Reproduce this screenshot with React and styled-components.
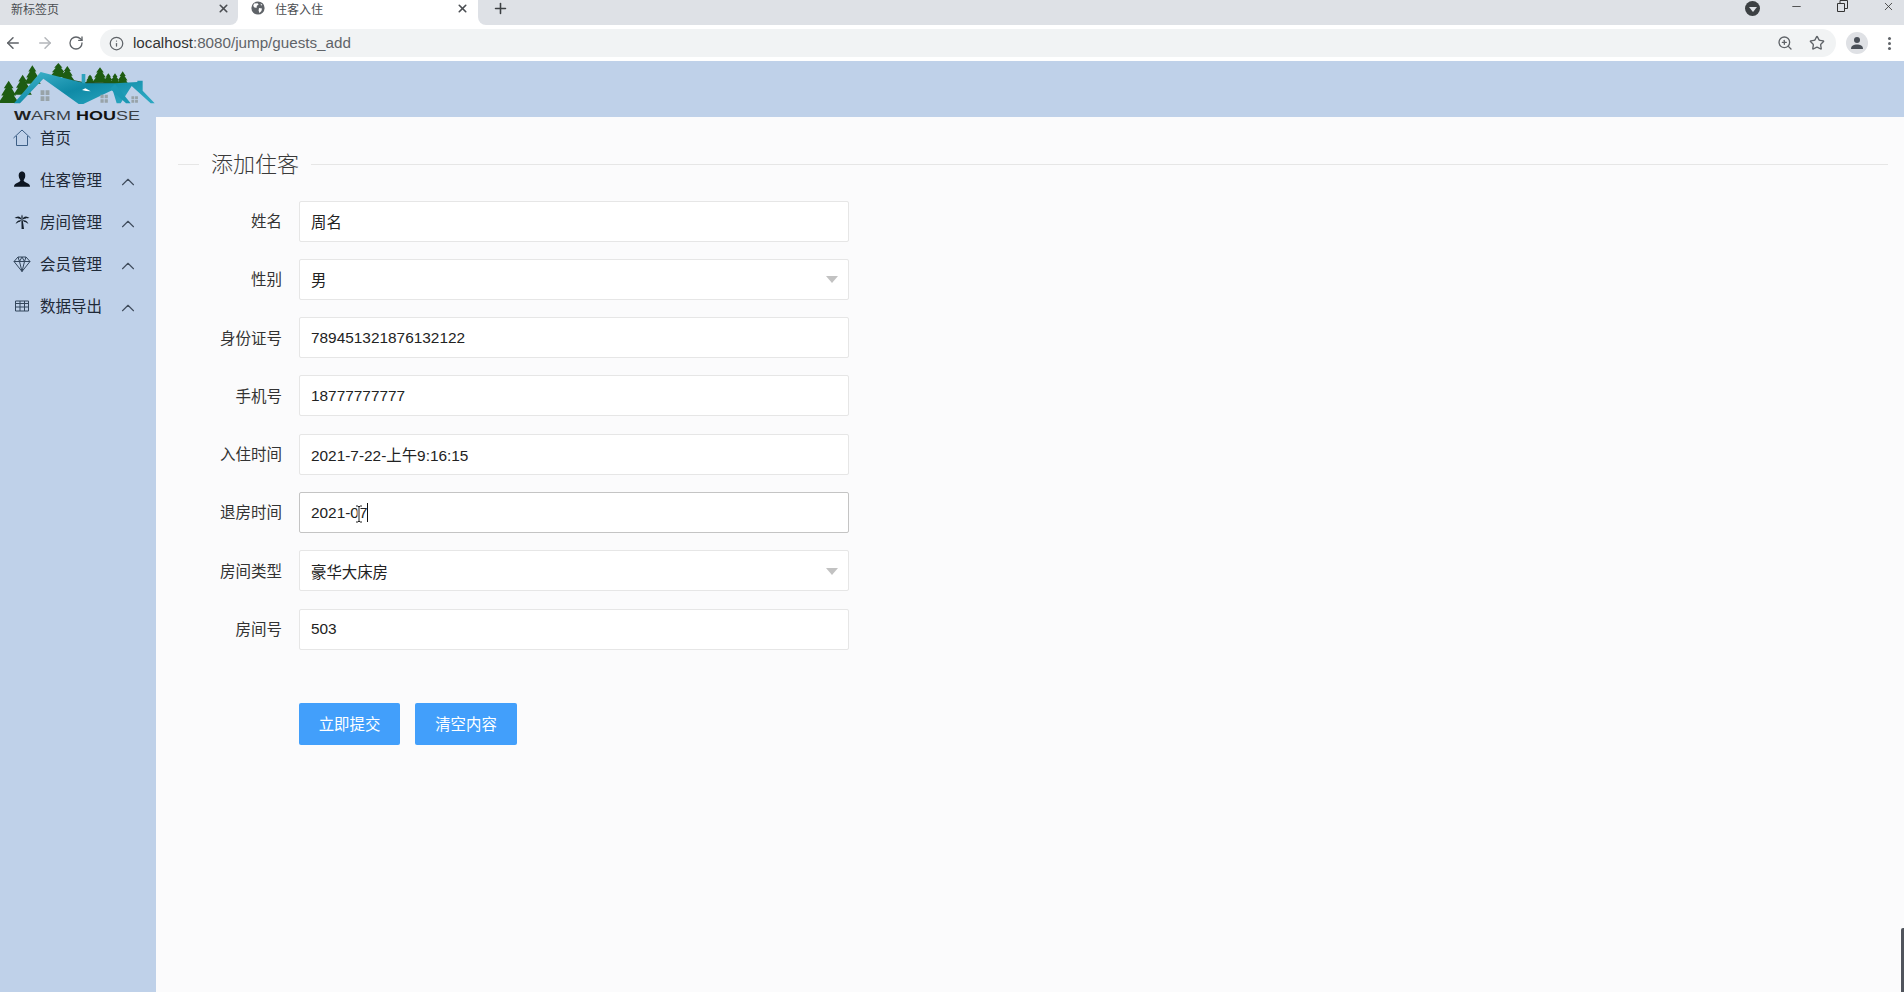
import React from "react";
import styled, { createGlobalStyle } from "styled-components";
import { ArrowLeft, ArrowRight, RotateCw, Info, ZoomIn, Star, X, Plus, Minus, ChevronUp } from "lucide-react";

const GlobalStyle = createGlobalStyle`
  html, body {
    margin: 0;
    height: 100%;
    overflow: hidden;
    background: #fbfbfc;
    font-family: "Liberation Sans", "Noto Sans CJK SC", sans-serif;
  }
  #root {
    height: 100%;
  }
`;

const Screen = styled.div`
  height: 992px;
  display: flex;
  flex-direction: column;
`;

const TabStrip = styled.div`
  height: 25px;
  background: #ffffff;
  display: flex;
  align-items: stretch;
  color: #4a4d51;
  font-size: 12px;
`;

const Tab = styled.div`
  width: ${(p) => (p.$active ? 240 : 238)}px;
  display: flex;
  align-items: center;
  box-sizing: border-box;
  padding: ${(p) => (p.$active ? "0 9px 9px 13px" : "0 8px 9px 11px")};
  gap: 10px;
  background: ${(p) => (p.$active ? "#ffffff" : "#dee1e6")};
  border-bottom-right-radius: ${(p) => (p.$active ? 0 : 8)}px;
  span {
    flex: 1;
  }
`;

const StripRest = styled.div`
  flex: 1;
  display: flex;
  background: #dee1e6;
  border-bottom-left-radius: 8px;
`;

const NewTab = styled.div`
  width: 44px;
  display: flex;
  align-items: center;
  justify-content: center;
  padding-bottom: 9px;
  color: #3c4043;
`;

const WindowControls = styled.div`
  margin-left: auto;
  display: flex;
  align-items: flex-start;
  color: #333;
  gap: 34px;
  padding: 0 9px 0 0;
`;

const ProfileDrop = styled.div`
  width: 15px;
  height: 15px;
  border-radius: 50%;
  background: #3c4043;
  display: flex;
  align-items: center;
  justify-content: center;
  margin: 1px -4px 0 0;
  &::after {
    content: "";
    border-left: 4px solid transparent;
    border-right: 4px solid transparent;
    border-top: 5px solid #dee1e6;
    margin-top: 2px;
  }
`;

const Toolbar = styled.div`
  height: 36px;
  background: #ffffff;
  display: flex;
  align-items: center;
  padding: 0 4px;
  color: #5f6368;
  gap: 14px;
`;

const AddressBar = styled.div`
  flex: 1;
  height: 28px;
  margin-left: 2px;
  background: #f1f3f4;
  border-radius: 14px;
  display: flex;
  align-items: center;
  padding: 0 11px 0 9px;
  font-size: 15.2px;
  color: #5f6368;
  gap: 9px;
  b {
    font-weight: 400;
    color: #333;
  }
`;

const AddressText = styled.div`
  flex: 1;
  padding-bottom: 2px;
`;

const AddressIcons = styled.div`
  display: flex;
  align-items: center;
  gap: 16px;
`;

const Avatar = styled.div`
  width: 22px;
  height: 22px;
  border-radius: 50%;
  background: #dfe1e5;
  margin: 0 6px 0 -4px;
  display: flex;
  align-items: center;
  justify-content: center;
`;

const MenuDots = styled.div`
  width: 3px;
  height: 3px;
  border-radius: 50%;
  background: #5f6368;
  box-shadow: 0 -5px 0 #5f6368, 0 5px 0 #5f6368;
  margin-right: 9px;
`;

const Page = styled.div`
  flex: 1;
  display: grid;
  grid-template-columns: 156px 1fr;
  grid-template-rows: 56px 1fr;
  min-height: 0;
`;

const Sidebar = styled.aside`
  grid-row: 1 / 3;
  background: #bfd1e9;
  display: flex;
  flex-direction: column;
`;

const LogoBox = styled.div`
  height: 54.5px;
  svg {
    display: block;
    overflow: visible;
  }
`;

const NavItem = styled.div`
  height: 42px;
  display: flex;
  align-items: center;
  padding-left: 13px;
  font-size: 15.5px;
  color: #1f2a38;
`;

const NavIcon = styled.div`
  width: 18px;
  height: 18px;
  margin-right: 9px;
  display: flex;
  align-items: center;
  justify-content: center;
  position: relative;
  top: 1px;
`;

const NavLabel = styled.span`
  width: 77px;
  white-space: nowrap;
`;

const Caret = styled(ChevronUp)`
  color: #3f4c5c;
  position: relative;
  top: 3px;
`;

const TopBand = styled.div`
  background: #bfd1e9;
`;

const Main = styled.main`
  padding: 30px 16px 0 22px;
  position: relative;
`;

const Legend = styled.div`
  display: flex;
  align-items: center;
  height: 30px;
  margin-bottom: 23.5px;
  color: #3a3a3a;
  font-size: 22px;
  font-weight: 300;
  &::before {
    content: "";
    width: 21px;
    height: 1px;
    background: #e6e6e6;
    margin: 4px 12px 0 0;
  }
  &::after {
    content: "";
    flex: 1;
    height: 1px;
    background: #e6e6e6;
    margin: 4px 0 0 12px;
  }
`;

const Form = styled.form`
  display: flex;
  flex-direction: column;
  gap: 17.3px;
`;

const Row = styled.div`
  display: flex;
  align-items: center;
`;

const Label = styled.label`
  width: 104px;
  margin: 0 17px 2px 0;
  text-align: right;
  font-size: 15.5px;
  color: #333;
  white-space: nowrap;
`;

const Field = styled.div`
  width: 550px;
  height: 41px;
  box-sizing: border-box;
  background: #fff;
  border: 1px solid ${(p) => (p.$focused ? "#c4c4c4" : "#e6e6e6")};
  border-radius: 2px;
  display: flex;
  align-items: center;
  padding: 0 10px 0 11px;
  font-size: 15.4px;
  color: #222;
  position: relative;
`;

const FieldText = styled.span`
  flex: 1;
  white-space: pre;
`;

const SelectArrow = styled.i`
  width: 0;
  height: 0;
  border-left: 6.5px solid transparent;
  border-right: 6.5px solid transparent;
  border-top: 7px solid #c2c2c2;
  margin-top: 1px;
`;

const TextCaret = styled.i`
  display: inline-block;
  width: 1px;
  height: 19px;
  background: #111;
  vertical-align: -4px;
`;

const MouseCursor = styled.svg`
  position: absolute;
  left: 55px;
  top: 12px;
`;

const Buttons = styled.div`
  display: flex;
  gap: 15px;
  margin: 53px 0 0 121px;
`;

const Button = styled.button`
  height: 42px;
  width: ${(p) => p.$w}px;
  border: 0;
  border-radius: 2px;
  background: #429ffb;
  color: #fff;
  font: inherit;
  font-size: 15.4px;
  padding: 0 0 2px;
`;

const ScrollStub = styled.div`
  position: absolute;
  right: 0;
  bottom: 0;
  width: 3px;
  height: 64px;
  border-radius: 2px 0 0 0;
  background: #50545c;
`;

// a pine drawn from its tip downwards in three tiers
const Tree = ({ x, top, h, w }) => {
  const t = (f) => top + h * f;
  return (
    <path
      fill="#1e5c12"
      d={`M${x} ${top} L${x + w * 0.26} ${t(0.34)} L${x + w * 0.16} ${t(0.34)} L${x + w * 0.4} ${t(0.66)} L${x + w * 0.28} ${t(0.66)} L${x + w * 0.55} ${t(1)} L${x - w * 0.55} ${t(1)} L${x - w * 0.28} ${t(0.66)} L${x - w * 0.4} ${t(0.66)} L${x - w * 0.16} ${t(0.34)} L${x - w * 0.26} ${t(0.34)} Z`}
    />
  );
};

const trees = [
  { x: 26, top: 68, h: 67, w: 56 },
  { x: 68, top: 50, h: 60, w: 50 },
  { x: 97, top: 22, h: 55, w: 46 },
  { x: 175, top: 15, h: 42, w: 48 },
  { x: 202, top: 24, h: 44, w: 40 },
  { x: 270, top: 50, h: 26, w: 28 },
  { x: 300, top: 28, h: 46, w: 44 },
  { x: 325, top: 46, h: 30, w: 30 },
  { x: 345, top: 46, h: 32, w: 30 },
  { x: 368, top: 40, h: 42, w: 36 },
];

const LogoWindow = ({ x, y, w, h }) => (
  <path
    fill="none"
    stroke="#98a3a8"
    strokeWidth={w / 2.6}
    strokeDasharray={`${h * 0.42} ${h * 0.12}`}
    d={`M${x + w * 0.25} ${y} V${y + h} M${x + w * 0.75} ${y} V${y + h}`}
  />
);

// drawn in 3x units of the 156 wide logo
const Logo = () => (
  <svg width="156" height="64" viewBox="0 9 468 192">
    <defs>
      <linearGradient id="roof" x1="0" y1="0" x2="1" y2="0.7">
        <stop offset="0" stopColor="#45b7cf" />
        <stop offset="0.55" stopColor="#0f8aa6" />
        <stop offset="1" stopColor="#2aa6c0" />
      </linearGradient>
    </defs>
    {trees.map((t) => (
      <Tree key={t.x} {...t} />
    ))}
    <path fill="#244f22" d="M200 62 L250 72 L345 74 L300 92 L256 112 Z" />
    <path fill="#2ea3bd" d="M245 48 H256 V78 H245 Z" />
    <path
      fill="url(#roof)"
      d="M42 136 L122 42 L215 66 L240 72 L252 76 L345 76 L412 72 V68 H428 V98 L464 136 H452 L395 84 L362 136 H350 L338 96 L250 138 H236 L130 62 L60 136 Z"
    />
    <path fill="#1b98b3" d="M330 92 L345 78 L392 136 H378 Z" />
    <path fill="#ffffff" d="M246 96 L256 91 L272 100 L258 99 Z" />
    <LogoWindow x={120} y={97} w={30} h={33} />
    <LogoWindow x={300} y={110} w={25} h={25} />
    <LogoWindow x={393} y={115} w={22} h={20} />
    <text
      x="42"
      y="185"
      fontFamily="Liberation Sans, sans-serif"
      fontSize="41"
      fill="#3a3f45"
      textLength="378"
      lengthAdjust="spacingAndGlyphs"
    >
      <tspan fontWeight="700" fill="#222">W</tspan>ARM <tspan fontWeight="700" fill="#111">HOU</tspan>SE
    </text>
  </svg>
);

const HomeIcon = () => (
  <svg width="18" height="18" viewBox="0 0 18 18" fill="none" stroke="#3d5f86" strokeWidth="1">
    <path d="M0.5 9 L9 1 L17.5 9" />
    <path d="M3.5 7 V16.5 H14.5 V7" />
  </svg>
);

const PersonIcon = () => (
  <svg width="18" height="18" viewBox="0 0 18 18" fill="#0d1622">
    <path d="M9 0.5 C11.6 0.5 12.6 3 12.2 5.6 C12 7.2 11.2 8.4 10.6 9.2 C10.6 10.6 13 11.4 15 12.4 C16.6 13.2 17 14.4 17 15.8 H1 C1 14.4 1.4 13.2 3 12.4 C5 11.4 7.4 10.6 7.4 9.2 C6.8 8.4 6 7.2 5.8 5.6 C5.4 3 6.4 0.5 9 0.5 Z" />
  </svg>
);

const PalmIcon = () => (
  <svg width="18" height="18" viewBox="0 0 18 18" fill="#16202c">
    <path d="M8.4 7.5 L9.8 7.5 L11 16 L8.6 16 Z" />
    <path d="M9 7 C7.5 3 4.5 2.6 1.5 5 C3 4.6 3.6 6 4.6 5 C5 6 6 5.2 9 7 Z" />
    <path d="M9 7 C10.5 3 13.5 2.6 16.5 5 C15 4.6 14.4 6 13.4 5 C13 6 12 5.2 9 7 Z" />
    <path d="M9 7.5 C6.5 6.5 3.5 7.5 2.6 11 C4 9.6 5 10 5.6 9 C6.4 9.4 7 8.4 9 7.5 Z" />
    <path d="M9 7.5 C11.5 6.5 14.5 7.5 15.4 11 C14 9.6 13 10 12.4 9 C11.6 9.4 11 8.4 9 7.5 Z" />
    <path d="M9 7 C8 5 8.2 3.2 9 1.6 C9.8 3.2 10 5 9 7 Z" />
  </svg>
);

const DiamondIcon = () => (
  <svg width="18" height="18" viewBox="0 0 18 18" fill="none" stroke="#33465c" strokeWidth="1">
    <path d="M5 2 H13 L17 6.5 L9 16.5 L1 6.5 Z" />
    <path d="M1 6.5 H17 M5 2 L6.5 6.5 L9 16.5 L11.5 6.5 L13 2 M6.5 6.5 L9 2 L11.5 6.5" />
  </svg>
);

const GridIcon = () => (
  <svg width="16" height="14" viewBox="0 0 16 14" fill="none" stroke="#33465c" strokeWidth="1">
    <path d="M1.5 2 H14.5 V12 H1.5 Z" />
    <path d="M1.5 4.5 H14.5 M1.5 8 H14.5 M6 2 V12 M10.5 2 V12" />
  </svg>
);

const GlobeIcon = () => (
  <svg width="14" height="14" viewBox="0 0 14 14">
    <circle cx="7" cy="7" r="6.6" fill="#5f6368" />
    <path
      fill="#fff"
      d="M3 2.6 L6.6 2.2 L7.6 3.6 L5.6 5 L6 6.4 L3.8 6.8 L2.2 5 Z M8 7 L11 7.6 L10.4 10 L8.4 12 L7.6 9.6 Z M9.6 2.6 L11.4 4 L10 4.6 Z"
    />
  </svg>
);

const AvatarIcon = () => (
  <svg width="14" height="14" viewBox="0 0 14 14" fill="#4a5058">
    <circle cx="7" cy="4" r="3" />
    <path d="M1 13 C1 9.6 4 8.6 7 8.6 C10 8.6 13 9.6 13 13 Z" />
  </svg>
);

const RestoreIcon = () => (
  <svg width="11" height="12" viewBox="0 0 11 12" fill="none" stroke="#333" strokeWidth="1">
    <path d="M0.5 3.5 H7.5 V11.5 H0.5 Z" />
    <path d="M3 3.5 V0.5 H10.5 V8.5 H7.5" />
  </svg>
);

const navItems = [
  { label: "住客管理", icon: <PersonIcon /> },
  { label: "房间管理", icon: <PalmIcon /> },
  { label: "会员管理", icon: <DiamondIcon /> },
  { label: "数据导出", icon: <GridIcon /> },
];

const fields = [
  { label: "姓名", value: "周名" },
  { label: "性别", value: "男", select: true },
  { label: "身份证号", value: "789451321876132122" },
  { label: "手机号", value: "18777777777" },
  { label: "入住时间", value: "2021-7-22-上午9:16:15" },
  { label: "退房时间", value: "2021-07", focused: true },
  { label: "房间类型", value: "豪华大床房", select: true },
  { label: "房间号", value: "503" },
];

const App = () => {
  return (
    <Screen>
      <GlobalStyle />
      <TabStrip>
        <Tab>
          <span>新标签页</span>
          <X size={13} strokeWidth={3} />
        </Tab>
        <Tab $active>
          <GlobeIcon />
          <span>住客入住</span>
          <X size={13} strokeWidth={3} />
        </Tab>
        <StripRest>
          <NewTab>
            <Plus size={17} strokeWidth={2.2} />
          </NewTab>
          <WindowControls>
            <ProfileDrop />
            <Minus size={13} strokeWidth={1.5} />
            <RestoreIcon />
            <X size={13} strokeWidth={1.5} />
          </WindowControls>
        </StripRest>
      </TabStrip>
      <Toolbar>
        <ArrowLeft size={18} />
        <ArrowRight size={18} color="#b4b7bb" />
        <RotateCw size={16} />
        <AddressBar>
          <Info size={15} />
          <AddressText>
            <b>localhost</b>:8080/jump/guests_add
          </AddressText>
          <AddressIcons>
            <ZoomIn size={16} />
            <Star size={16} />
          </AddressIcons>
        </AddressBar>
        <Avatar>
          <AvatarIcon />
        </Avatar>
        <MenuDots />
      </Toolbar>
      <Page>
        <Sidebar>
          <LogoBox>
            <Logo />
          </LogoBox>
          <NavItem>
            <NavIcon>
              <HomeIcon />
            </NavIcon>
            <NavLabel>首页</NavLabel>
          </NavItem>
          {navItems.map((item) => (
            <NavItem key={item.label}>
              <NavIcon>{item.icon}</NavIcon>
              <NavLabel>{item.label}</NavLabel>
              <Caret size={22} strokeWidth={1.2} />
            </NavItem>
          ))}
        </Sidebar>
        <TopBand />
        <Main>
          <Legend>添加住客</Legend>
          <Form>
            {fields.map((f) => (
              <Row key={f.label}>
                <Label>{f.label}</Label>
                <Field $focused={f.focused}>
                  <FieldText>
                    {f.value}
                    {f.focused && <TextCaret />}
                  </FieldText>
                  {f.select && <SelectArrow />}
                  {f.focused && (
                    <MouseCursor width="8" height="18" viewBox="0 0 8 18" fill="none">
                      <path stroke="#fff" strokeWidth="3" d="M4 2 V16" />
                      <path stroke="#222" strokeWidth="1" d="M1 1 H3 L4 2 L5 1 H7 M4 2 V16 M1 17 H3 L4 16 L5 17 H7" />
                    </MouseCursor>
                  )}
                </Field>
              </Row>
            ))}
          </Form>
          <Buttons>
            <Button type="button" $w={101}>立即提交</Button>
            <Button type="button" $w={102}>清空内容</Button>
          </Buttons>
          <ScrollStub />
        </Main>
      </Page>
    </Screen>
  );
};

export default App;
